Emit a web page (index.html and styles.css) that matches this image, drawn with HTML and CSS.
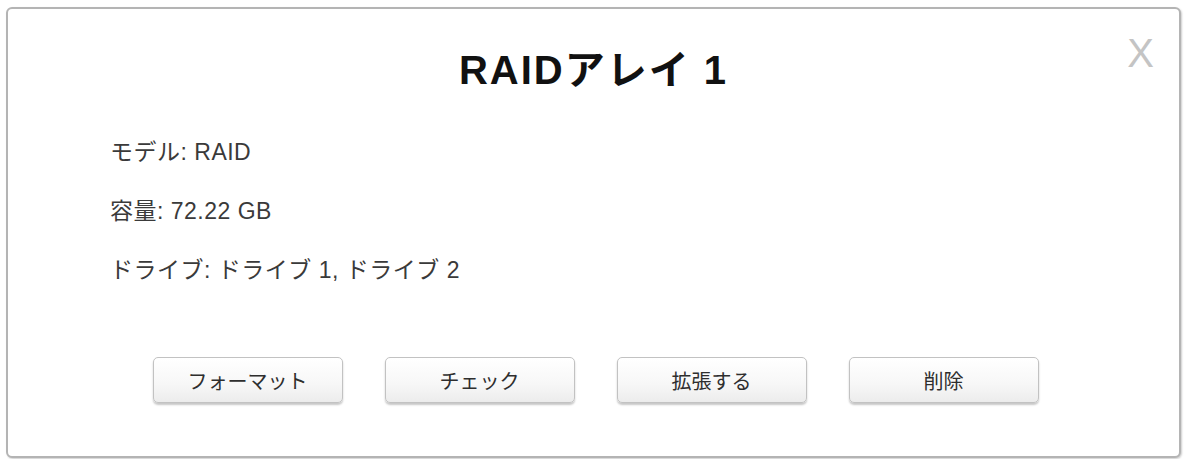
FILE: index.html
```html
<!DOCTYPE html>
<html lang="ja">
<head>
<meta charset="utf-8">
<title>RAIDアレイ 1</title>
<link rel="stylesheet" href="styles.css">
</head>
<body>
<div class="dialog">
  <span class="close">X</span>
  <h1 class="title">RAIDアレイ 1</h1>
  <div class="info">
    <p class="row">モデル: RAID</p>
    <p class="row">容量: 72.22 GB</p>
    <p class="row">ドライブ: ドライブ 1, ドライブ 2</p>
  </div>
  <div class="actions">
    <button class="btn">フォーマット</button>
    <button class="btn">チェック</button>
    <button class="btn">拡張する</button>
    <button class="btn">削除</button>
  </div>
</div>
</body>
</html>
```

FILE: styles.css
```css
html, body {
  margin: 0;
  padding: 0;
  background: #ffffff;
}
body {
  width: 1187px;
  height: 459px;
  overflow: hidden;
  font-family: "Liberation Sans", Arial, "Noto Sans CJK JP", sans-serif;
}
.dialog {
  position: relative;
  box-sizing: border-box;
  margin: 7px 0 0 6px;
  width: 1175px;
  height: 451px;
  border: 2px solid #b4b4b4;
  border-radius: 6px;
  background: #fff;
  box-shadow: 1px 1px 2px rgba(0,0,0,0.2);
}
.close {
  position: absolute;
  top: 24px;
  right: 25px;
  font-size: 40px;
  line-height: 40px;
  color: #c4c4c4;
  font-family: "Liberation Sans", Arial, sans-serif;
}
.title {
  margin: 36px 0 0;
  line-height: 50px;
  font-size: 40px;
  font-weight: bold;
  text-align: center;
  color: #111;
  letter-spacing: 2px;
}
.info {
  margin-top: 28px;
  padding-left: 102px;
}
.row {
  margin: 0;
  line-height: 59px;
  font-size: 23px;
  letter-spacing: 0.5px;
  color: #3a3a3a;
}
.actions {
  margin-top: 57px;
  display: flex;
  justify-content: center;
  gap: 42px;
  padding-left: 4px;
}
.btn {
  width: 190px;
  height: 46px;
  border: 1px solid #c2c2c2;
  border-radius: 5px;
  background: linear-gradient(#ffffff, #f7f7f7 60%, #ececec);
  box-shadow: 0 2px 2px rgba(0,0,0,0.22);
  font-family: "Noto Sans CJK JP", sans-serif;
  font-size: 20px;
  color: #2e2e2e;
  padding: 0;
}
```
